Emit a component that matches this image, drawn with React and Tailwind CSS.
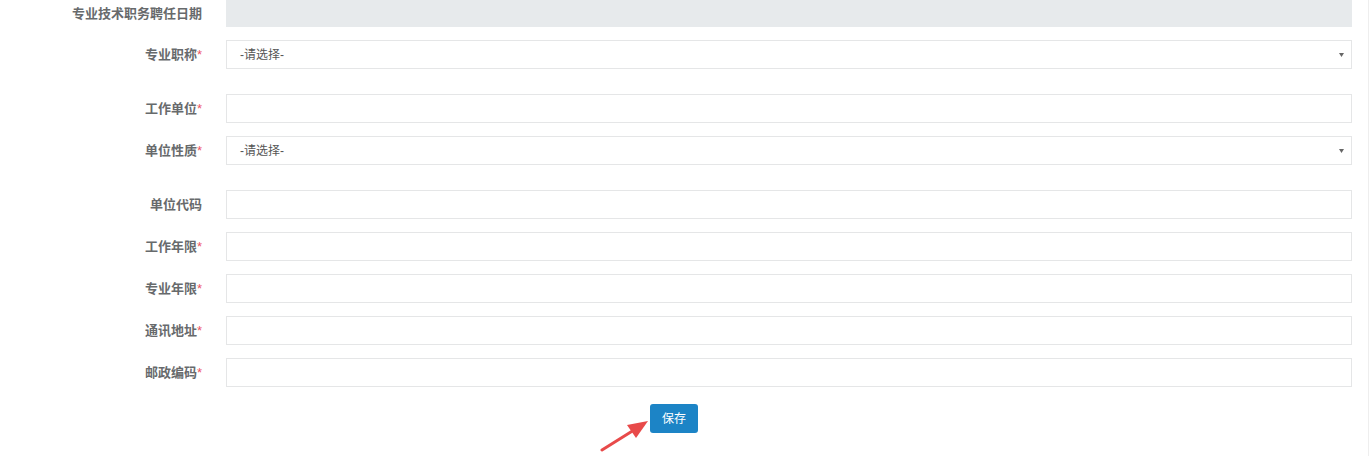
import { useState } from "react";

const font = { fontFamily: '"Liberation Sans", "Noto Sans CJK SC", sans-serif' };

const rows = [
  { label: "专业职称", required: true, type: "select", after: true },
  { label: "工作单位", required: true, type: "input" },
  { label: "单位性质", required: true, type: "select", after: true },
  { label: "单位代码", required: false, type: "input" },
  { label: "工作年限", required: true, type: "input" },
  { label: "专业年限", required: true, type: "input" },
  { label: "通讯地址", required: true, type: "input" },
  { label: "邮政编码", required: true, type: "input" },
];

function Label({ text, required }) {
  return (
    <label className="w-[202px] shrink-0 text-right text-[13px] font-bold text-[#676a6c] leading-none">
      {text}
      {required && <span className="font-normal text-[#ed5565]">*</span>}
    </label>
  );
}

export default function App() {
  const [values, setValues] = useState({});

  const boxCls = "flex-1 h-[29px] border border-[#e5e6e7] bg-white text-[12px] text-[#555] px-3 outline-none";

  return (
    <div className="w-[1369px] h-[456px] bg-white border-r border-[#eeeeee] overflow-hidden" style={font}>
      <div className="flex flex-col pr-[16px]">
        {/* date row (disabled) */}
        <div className="flex items-center h-[27px] mb-[13px]">
          <Label text="专业技术职务聘任日期" />
          <div className="flex-1 ml-[24px] h-[27px] bg-[#e7eaec]" />
        </div>

        {rows.map((r) => (
          <div key={r.label} className={`flex items-center gap-[24px] ${r.after ? "mb-[25px]" : "mb-[13px]"}`}>
            <Label text={r.label} required={r.required} />
            {r.type === "select" ? (
              <div className={`${boxCls} relative flex items-center pl-[13px]`}>
                <span>-请选择-</span>
                <svg className="absolute right-[7px] top-[12px]" width="5" height="4" viewBox="0 0 5 4">
                  <path d="M0 0h5L2.5 4z" fill="#666" />
                </svg>
              </div>
            ) : (
              <input
                className={boxCls}
                value={values[r.label] || ""}
                onChange={(e) => setValues({ ...values, [r.label]: e.target.value })}
              />
            )}
          </div>
        ))}

        <div className="relative flex justify-center mt-[4px]">
          <button className="-ml-[4px] w-[48px] h-[29px] rounded-[3px] bg-[#1c84c6] text-white text-[12px]">
            保存
          </button>
          {/* annotation arrow */}
          <svg className="absolute left-[600px] top-[14px]" width="50" height="34" viewBox="0 0 50 34">
            <path d="M2 32 L34 12" stroke="#e84a4a" strokeWidth="3" strokeLinecap="round" />
            <path d="M48 3 L27 7 L36 20 Z" fill="#e84a4a" />
          </svg>
        </div>
      </div>
    </div>
  );
}
